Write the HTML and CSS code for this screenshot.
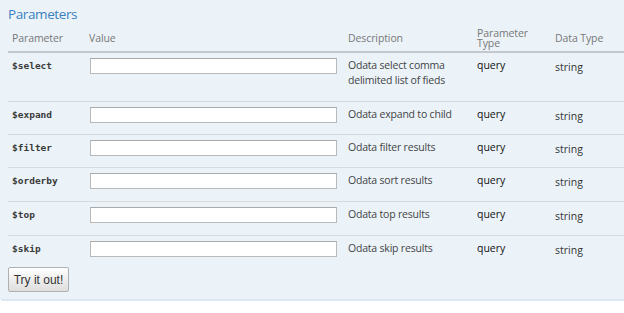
FILE: index.html
```html
<!DOCTYPE html>
<html>
<head>
<meta charset="utf-8">
<link rel="stylesheet" href="styles.css">
</head>
<body>
<div class="panel">
  <h4 class="title">Parameters</h4>
  <table class="params">
    <colgroup>
      <col class="c-name"><col class="c-value"><col class="c-desc"><col class="c-ptype"><col class="c-dtype">
    </colgroup>
    <thead>
      <tr>
        <th>Parameter</th>
        <th>Value</th>
        <th>Description</th>
        <th>Parameter<br>Type</th>
        <th>Data Type</th>
      </tr>
    </thead>
    <tbody>
      <tr class="first">
        <td class="code">$select</td>
        <td><input class="field" type="text"></td>
        <td class="desc">Odata select comma delimited list of fieds</td>
        <td class="ptype">query</td>
        <td class="dtype">string</td>
      </tr>
      <tr>
        <td class="code">$expand</td>
        <td><input class="field" type="text"></td>
        <td class="desc">Odata expand to child</td>
        <td class="ptype">query</td>
        <td class="dtype">string</td>
      </tr>
      <tr>
        <td class="code">$filter</td>
        <td><input class="field" type="text"></td>
        <td class="desc">Odata filter results</td>
        <td class="ptype">query</td>
        <td class="dtype">string</td>
      </tr>
      <tr class="tall">
        <td class="code">$orderby</td>
        <td><input class="field" type="text"></td>
        <td class="desc">Odata sort results</td>
        <td class="ptype">query</td>
        <td class="dtype">string</td>
      </tr>
      <tr class="tall">
        <td class="code">$top</td>
        <td><input class="field" type="text"></td>
        <td class="desc">Odata top results</td>
        <td class="ptype">query</td>
        <td class="dtype">string</td>
      </tr>
      <tr class="last">
        <td class="code">$skip</td>
        <td><input class="field" type="text"></td>
        <td class="desc">Odata skip results</td>
        <td class="ptype">query</td>
        <td class="dtype">string</td>
      </tr>
    </tbody>
  </table>
  <button class="try" type="button">Try it out!</button>
</div>
</body>
</html>
```
FILE: styles.css
```css
html, body {
  margin: 0;
  padding: 0;
  background: #ffffff;
}
body {
  font-family: "Open Sans", "DejaVu Sans", sans-serif;
}
.panel {
  width: 616px;
  background: #ebf3f9;
  border-bottom: 2px solid #dae6f1;
  border-bottom-left-radius: 4px;
  padding: 7px 0 7px 8px;
}
.title {
  margin: 0;
  font-size: 13.5px;
  letter-spacing: -0.4px;
  font-weight: normal;
  line-height: 15px;
  color: #3b7fc0;
}
.params {
  border-collapse: separate;
  border-spacing: 0;
  table-layout: fixed;
  width: 616px;
}
.c-name { width: 77px; }
.c-value { width: 259px; }
.c-desc { width: 129px; }
.c-ptype { width: 78px; }
.c-dtype { width: 73px; }
.params th {
  text-align: left;
  font-weight: normal;
  font-size: 10.5px;
  letter-spacing: -0.1px;
  line-height: 10px;
  color: #777;
  vertical-align: middle;
  padding: 6px 4px 3px;
  border-bottom: 2px solid #c4c8cc;
}
.params td {
  vertical-align: top;
  padding: 5px 4px 11px;
  font-size: 10.5px;
  line-height: 15px;
  color: #444;
  border-bottom: 1px solid #d6dbe0;
}
.params td.desc {
  letter-spacing: -0.2px;
}
.params tr.first td {
  padding-bottom: 13px;
}
.params tr.tall td {
  padding-bottom: 12px;
}
.params tr.last td {
  border-bottom: none;
  padding-bottom: 10px;
}
.params td.code {
  font-family: "DejaVu Sans Mono", "Liberation Mono", monospace;
  font-weight: bold;
  font-size: 9.5px;
  color: #3a3a3a;
}
.params td.ptype {
  color: #111;
}
.params td.dtype {
  color: #333;
  padding-top: 7px;
  padding-bottom: 9px;
}
.params tr.first td.dtype {
  padding-bottom: 11px;
}
.params tr.tall td.dtype {
  padding-bottom: 10px;
}
.params tr.last td.dtype {
  padding-bottom: 8px;
}
.field {
  display: block;
  box-sizing: border-box;
  width: 247px;
  height: 16px;
  margin: 0 0 0 1px;
  padding: 0 3px;
  border: 1px solid #b9b9b9;
  border-top-color: #a9a9a9;
  background: #ffffff;
  font-size: 11px;
}
.try {
  display: block;
  margin: 0;
  width: 61px;
  height: 25px;
  padding: 0;
  font-family: "Liberation Sans", Arial, sans-serif;
  font-size: 12px;
  color: #333;
  border: 1px solid #b0b0b0;
  border-radius: 2px;
  background: linear-gradient(#ffffff, #dedede);
}
```
